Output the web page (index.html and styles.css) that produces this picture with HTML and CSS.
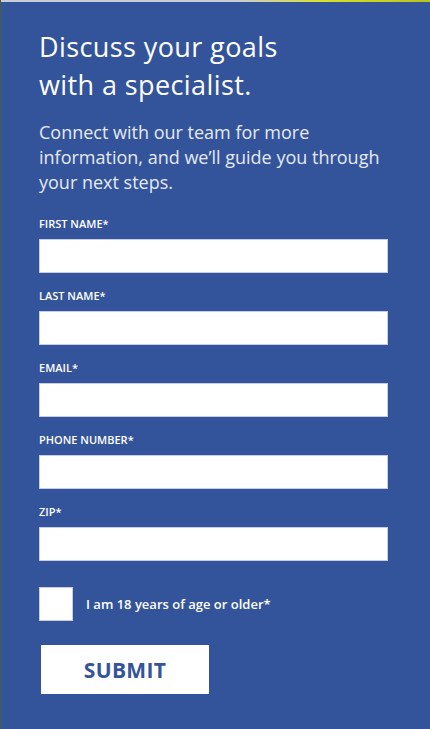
FILE: index.html
```html
<!DOCTYPE html>
<html>
<head>
    <meta name="viewport" content="width=device-width, initial-scale=1.0">
    <title>Discuss your goals with a specialist</title>

    <!-- CSS Styles -->
    <link rel="stylesheet" href="styles.css">
</head>
<body>
    <div class="top-strip"></div>

    <!-- Lead form panel -->
    <div class="lead-panel">
        <h1>Discuss your goals<br>with a specialist.</h1>
        <p class="intro">Connect with our team for more information, and we&rsquo;ll guide you through your next steps.</p>

        <form class="lead-form" onsubmit="return false">
            <div class="field">
                <label for="first">First Name*</label>
                <input type="text" id="first">
            </div>
            <div class="field">
                <label for="last">Last Name*</label>
                <input type="text" id="last">
            </div>
            <div class="field">
                <label for="email">Email*</label>
                <input type="email" id="email">
            </div>
            <div class="field">
                <label for="phone">Phone Number*</label>
                <input type="tel" id="phone">
            </div>
            <div class="field">
                <label for="zip">Zip*</label>
                <input type="text" id="zip">
            </div>

            <label class="age-check">
                <input type="checkbox">
                <span class="box"></span>
                <span>I am 18 years of age or older*</span>
            </label>

            <button type="submit">SUBMIT</button>
        </form>
    </div>
</body>
</html>
```

FILE: styles.css
```css
body {
    margin: 0;
    font-family: "Open Sans", "Noto Sans", sans-serif;
    background-color: #33549b;
    color: #ffffff;
    height: 729px;
    overflow: hidden;
    border-left: 1px solid #4d5a3c;
}

.top-strip {
    height: 2px;
    background: linear-gradient(to right, #c9cdd6 0%, #c9cdd6 55%, #d8e02a 75%, #b9c21c 100%);
}

/* Lead form panel */
.lead-panel {
    padding: 26px 42px 0 38px;
}

h1 {
    margin: 0;
    font-size: 27px;
    font-weight: 500;
    line-height: 38px;
    letter-spacing: 0.4px;
}

.intro {
    margin: 16px 0 0;
    font-size: 18px;
    line-height: 25px;
    color: #e6e9f2;
}

.lead-form {
    margin-top: 22px;
}

.field {
    display: flex;
    flex-direction: column;
    gap: 8px;
    margin-bottom: 16px;
}

.field label {
    font-size: 11px;
    font-weight: 600;
    line-height: 14px;
    text-transform: uppercase;
}

.field input {
    box-sizing: border-box;
    width: 349px;
    height: 34px;
    margin: 0;
    border: 1px solid #c4cde3;
    background-color: #ffffff;
    border-radius: 0;
}

.age-check {
    display: flex;
    align-items: center;
    gap: 13px;
    margin-top: 26px;
    font-size: 13px;
    font-weight: 600;
    cursor: pointer;
}

.age-check input {
    display: none;
}

.age-check .box {
    width: 34px;
    height: 34px;
    box-sizing: border-box;
    background-color: #ffffff;
    border: 1px solid #c4cde3;
}

button {
    margin: 24px 0 0 2px;
    width: 168px;
    height: 49px;
    background-color: #ffffff;
    color: #33549b;
    border: none;
    font-family: "Open Sans", sans-serif;
    font-size: 21px;
    font-weight: 700;
    letter-spacing: 0.3px;
    cursor: pointer;
}
```
